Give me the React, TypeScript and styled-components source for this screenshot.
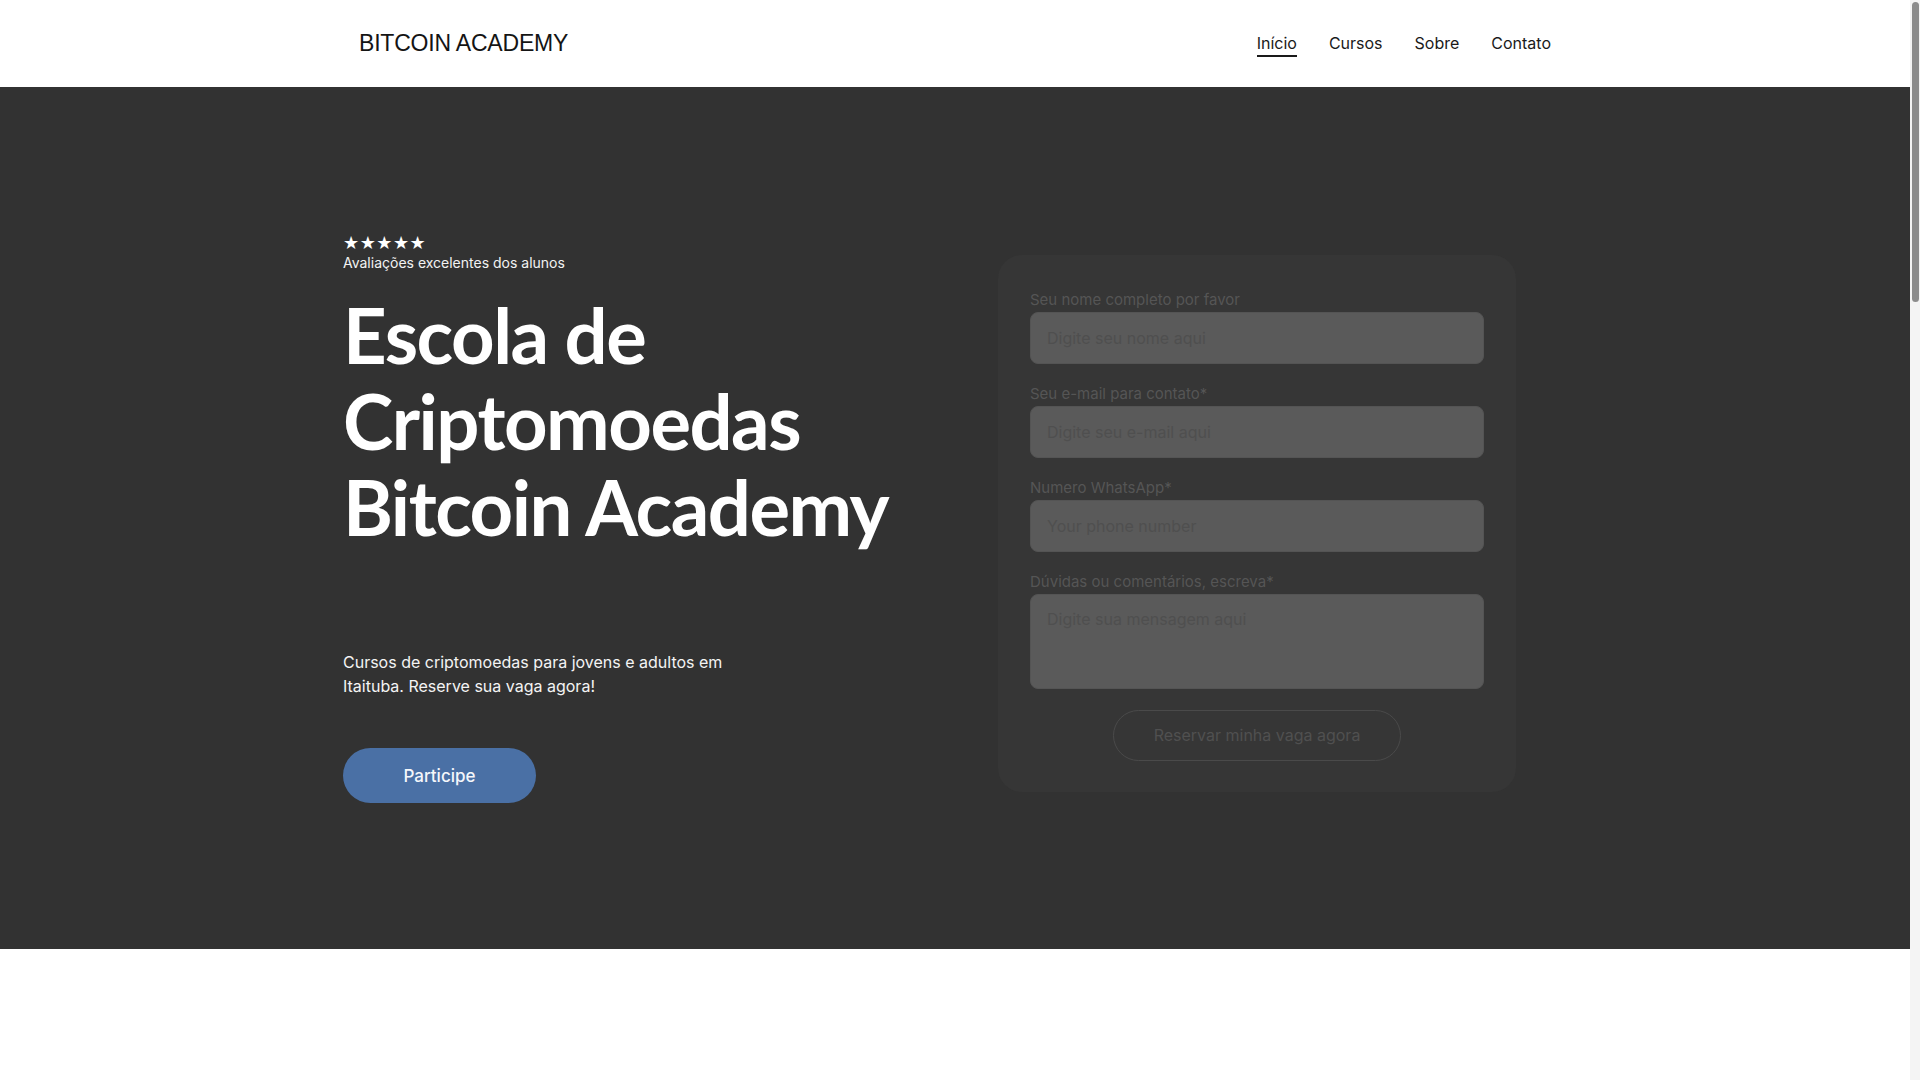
import { createGlobalStyle } from "styled-components";
import styled from "styled-components";

const GlobalStyle = createGlobalStyle`
  * {
    box-sizing: border-box;
  }
  body {
    margin: 0 10px 0 0;
    font-family: Inter, "Noto Sans", sans-serif;
    background: #ffffff;
    color: #111111;
  }
`;

// the reference was taken with a page scrollbar showing; headless hides it
const ScrollTrack = styled.div`
  position: fixed;
  top: 0;
  right: 0;
  width: 10px;
  height: 100vh;
  background: #f4f4f4;
`;

const ScrollThumb = styled.div`
  margin: 2px auto 0;
  width: 7px;
  height: 300px;
  border-radius: 4px;
  background: #8c8c8c;
`;

const Container = styled.div`
  width: 1224px;
  max-width: 100%;
  margin: 0 auto;
`;

const Header = styled.header`
  height: 87px;
  background: #ffffff;
`;

const HeaderInner = styled(Container)`
  height: 100%;
  padding: 0 16px;
  display: flex;
  align-items: center;
  justify-content: space-between;
`;

const Logo = styled.a`
  font-family: "Liberation Sans", Arial, sans-serif;
  font-size: 23px;
  color: #141414;
  text-decoration: none;
  letter-spacing: -0.2px;
`;

const Nav = styled.nav`
  display: flex;
  gap: 32px;
  align-items: center;
  margin-bottom: 2px;
`;

const NavLink = styled.a<{ $active?: boolean }>`
  font-size: 16px;
  color: #1a1a1a;
  text-decoration: none;
  padding: 4px 0 2px;
  border-bottom: 2px solid ${(p) => (p.$active ? "#1a1a1a" : "transparent")};
`;

const Hero = styled.section`
  background: #323232;
  height: 862px;
  display: flex;
  align-items: center;
`;

const HeroInner = styled(Container)`
  display: flex;
  justify-content: space-between;
  align-items: center;
  padding-right: 51px;
`;

const Intro = styled.div`
  display: flex;
  flex-direction: column;
  color: #ffffff;
`;

const Stars = styled.div`
  font-family: "DejaVu Sans", sans-serif;
  font-size: 18px;
  line-height: 20px;
  letter-spacing: 0.5px;
`;

const Rating = styled.div`
  margin-top: 1px;
  font-size: 14px;
  line-height: 18px;
  color: #f2f2f2;
`;

const Title = styled.h1`
  font-family: Lato, "Noto Sans", sans-serif;
  font-weight: 700;
  font-size: 76px;
  line-height: 86px;
  letter-spacing: -1.5px;
  margin: 20px 0 0;
`;

const Lead = styled.p`
  max-width: 400px;
  font-size: 16px;
  line-height: 24px;
  color: #f4f4f4;
  margin: 100px 0 0;
`;

const CtaButton = styled.button`
  margin-top: 50px;
  width: 193px;
  height: 55px;
  border: none;
  border-radius: 999px;
  background: #4a70a5;
  color: #f5f7fb;
  font-family: Inter, sans-serif;
  font-size: 17px;
  font-weight: 500;
`;

const Card = styled.form`
  width: 518px;
  margin-top: 10px;
  padding: 35px 32px 31px;
  border-radius: 24px;
  background: #363636;
  display: flex;
  flex-direction: column;
`;

const Field = styled.label`
  display: flex;
  flex-direction: column;
  gap: 2px;
  margin-bottom: 20px;
`;

const FieldLabel = styled.span`
  font-size: 15px;
  line-height: 20px;
  color: #555555;
`;

const inputLook = `
  width: 100%;
  border: 1px solid #545454;
  border-radius: 8px;
  background: #5a5a5a;
  padding: 0 16px;
  font-family: Inter, sans-serif;
  font-size: 16px;
  color: #4e4e4e;
  outline: none;
  &::placeholder {
    color: #4f4f4f;
  }
`;

const Input = styled.input`
  ${inputLook}
  height: 52px;
`;

const TextArea = styled.textarea<{ $rows: number }>`
  ${inputLook}
  height: ${(p) => p.$rows * 24 + 23}px;
  padding-top: 14px;
  resize: none;
`;

const SubmitButton = styled.button`
  align-self: center;
  margin-top: 1px;
  width: 288px;
  height: 51px;
  border: 1px solid #4a4a4a;
  border-radius: 999px;
  background: transparent;
  color: #505050;
  font-family: Inter, sans-serif;
  font-size: 16px;
`;

const Below = styled.section`
  height: 2800px;
  background: #ffffff;
`;

const fields = [
  { label: "Seu nome completo por favor", placeholder: "Digite seu nome aqui" },
  { label: "Seu e-mail para contato*", placeholder: "Digite seu e-mail aqui" },
  { label: "Numero WhatsApp*", placeholder: "Your phone number" },
];

export default function App() {
  return (
    <>
      <GlobalStyle />
      <Header>
        <HeaderInner>
          <Logo href="#">BITCOIN ACADEMY</Logo>
          <Nav>
            <NavLink href="#" $active>
              Início
            </NavLink>
            <NavLink href="#">Cursos</NavLink>
            <NavLink href="#">Sobre</NavLink>
            <NavLink href="#">Contato</NavLink>
          </Nav>
        </HeaderInner>
      </Header>
      <Hero>
        <HeroInner>
          <Intro>
            <Stars>★★★★★</Stars>
            <Rating>Avaliações excelentes dos alunos</Rating>
            <Title>
              Escola de
              <br />
              Criptomoedas
              <br />
              Bitcoin Academy
            </Title>
            <Lead>
              Cursos de criptomoedas para jovens e adultos em Itaituba. Reserve
              sua vaga agora!
            </Lead>
            <CtaButton type="button">Participe</CtaButton>
          </Intro>
          <Card onSubmit={(e) => e.preventDefault()}>
            {fields.map((f) => (
              <Field key={f.label}>
                <FieldLabel>{f.label}</FieldLabel>
                <Input placeholder={f.placeholder} />
              </Field>
            ))}
            <Field>
              <FieldLabel>Dúvidas ou comentários, escreva*</FieldLabel>
              <TextArea $rows={3} placeholder="Digite sua mensagem aqui" />
            </Field>
            <SubmitButton type="submit">Reservar minha vaga agora</SubmitButton>
          </Card>
        </HeroInner>
      </Hero>
      <Below />
      <ScrollTrack>
        <ScrollThumb />
      </ScrollTrack>
    </>
  );
}
